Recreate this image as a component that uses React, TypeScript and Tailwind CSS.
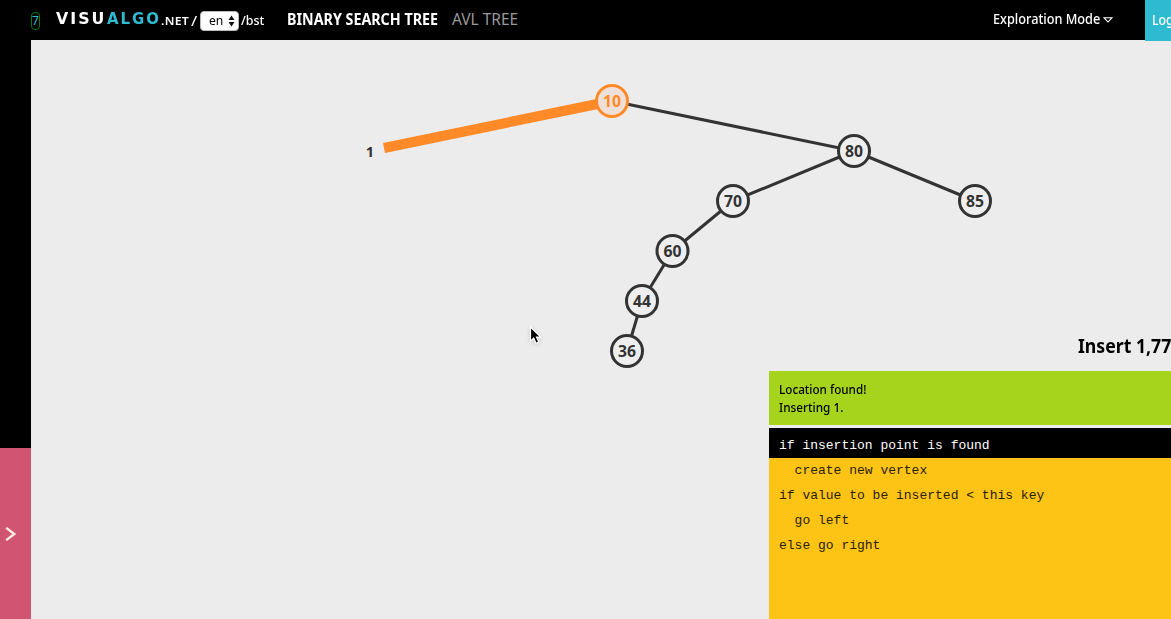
import { useLayoutEffect, useRef, useState } from "react";

type FitProps = { text: string; box: string; className: string };

/** One line of text condensed or widened to the width of its box. */
function FitText({ text, box, className }: FitProps) {
  const ref = useRef<HTMLSpanElement>(null);
  const [scale, setScale] = useState(1);
  useLayoutEffect(() => {
    const el = ref.current;
    if (el && el.parentElement) setScale(el.parentElement.offsetWidth / el.offsetWidth);
  }, [text]);
  return (
    <div className={`shrink-0 ${box}`}>
      <span
        ref={ref}
        className={`block w-max origin-left whitespace-nowrap ${className}`}
        style={{ transform: `scaleX(${scale})` }}
      >
        {text}
      </span>
    </div>
  );
}

const nodes = [
  { x: 854, y: 151, v: "80" },
  { x: 733, y: 201, v: "70" },
  { x: 975, y: 201, v: "85" },
  { x: 672.5, y: 251, v: "60" },
  { x: 642, y: 301, v: "44" },
  { x: 627, y: 351, v: "36" },
];

const edges = [
  [612, 101, 854, 151],
  [854, 151, 733, 201],
  [854, 151, 975, 201],
  [733, 201, 672.5, 251],
  [672.5, 251, 642, 301],
  [642, 301, 627, 351],
];

const code = ["  create new vertex", "if value to be inserted < this key", "  go left", "else go right"];

function Tree() {
  return (
    <svg className="absolute inset-0" width="1140" height="579" viewBox="31 40 1140 579">
      {edges.map(([a, b, c, d], i) => (
        <line key={i} x1={a} y1={b} x2={c} y2={d} stroke="#333" strokeWidth="3" />
      ))}
      <line x1="384" y1="148" x2="612" y2="101" stroke="#ff8a27" strokeWidth="10" />
      <circle cx="612" cy="101" r="15.5" fill="#eee0d8" stroke="#ff8a27" strokeWidth="3" />
      {nodes.map((n) => (
        <circle key={n.v} cx={n.x} cy={n.y} r="15.5" fill="#eee" stroke="#333" strokeWidth="3" />
      ))}
      <g fontFamily="Noto Sans, sans-serif" fontWeight="700" fontSize="15.5" textAnchor="middle" fill="#333">
        {nodes.map((n) => (
          <text key={n.v} x={n.x} y={n.y + 5.5} textLength="18" lengthAdjust="spacingAndGlyphs">
            {n.v}
          </text>
        ))}
        <text x="612" y="106.5" fill="#ff8a27" textLength="18" lengthAdjust="spacingAndGlyphs">10</text>
        <text x="370" y="156.5" fontSize="14.5">1</text>
      </g>
      <path
        d="M530.5 327v14.2l3.2-3.1 2.3 5.1 2.7-1.2-2.2-4.9h4.2z"
        fill="#000"
        stroke="#fff"
        strokeWidth="1.2"
        className="drop-shadow-sm"
      />
    </svg>
  );
}

export default function App() {
  return (
    <div className="flex h-[619px] w-[1171px] flex-col overflow-hidden bg-[#ececec] font-['Noto_Sans',sans-serif]">
      <header className="relative z-10 flex h-10 shrink-0 items-start bg-black pl-[31px] text-white">
        <div className="mt-3 flex h-[18px] w-[9px] items-center justify-center rounded-[4px] border border-[#087a08] text-[12px] leading-none text-[#2ebbd1]">
          7
        </div>
        <div className="ml-[16px] flex w-[105px] pt-[10px] font-['DejaVu_Sans',sans-serif] text-[15.5px] leading-[18px] font-bold tracking-[2px]">
          <FitText text="VISU" box="w-[51px]" className="" />
          <div className="flex text-[#2ebbd1]">
            <FitText text="ALGO" box="w-[54px]" className="" />
          </div>
        </div>
        <FitText text=".NET" box="w-[28px] pt-[13px]" className="text-[10.5px] leading-4 font-semibold tracking-wide" />
        <FitText text="/" box="ml-[2px] w-[6px] pt-[11px]" className="text-[14px] leading-5" />
        <div className="mt-[11px] ml-[3px] flex h-5 w-[39px] items-center rounded-[4px] border border-[#bbb] bg-white pl-[8px] pb-[2px] text-black">
          <FitText text="en" box="w-[14px]" className="text-[13px] leading-[16px]" />
          <svg className="mt-[2px] ml-[5px]" width="7" height="12" viewBox="0 0 7 12">
            <path d="M3.5 .5L6.5 5h-6zM3.5 11.5L6.5 7h-6z" fill="#111" />
          </svg>
        </div>
        <FitText text="/bst" box="ml-[2px] w-[23px] pt-[10px]" className="text-[13px] leading-5 font-medium" />
        <FitText text="BINARY SEARCH TREE" box="ml-[23px] w-[151px] pt-[7px]" className="text-[15.5px] leading-6 font-bold" />
        <FitText text="AVL TREE" box="ml-[14px] w-[66px] pt-[7px]" className="text-[15.5px] leading-6 text-[#999]" />
        <FitText text="Exploration Mode" box="ml-auto w-[107px] pt-[9px]" className="text-[14px] leading-5 font-medium" />
        <svg className="mt-[17px] ml-[3px]" width="10" height="6" viewBox="0 0 10 6">
          <path d="M1 .7h8L5 5z" fill="none" stroke="#fff" strokeWidth="1.1" />
        </svg>
        <div className="ml-[32px] h-[41px] w-[26px] shrink-0 overflow-hidden bg-[#2ebbd1] pt-[10px] pl-[7px]">
          <FitText text="Log" box="w-[22px]" className="text-[14px] leading-5 font-medium" />
        </div>
      </header>

      <div className="flex min-h-0 flex-1">
        <aside className="flex w-[31px] shrink-0 flex-col bg-black">
          <div className="flex-1" />
          <div className="flex h-[171px] items-center bg-[#d15573] pl-[5px]">
            <svg width="12" height="14" viewBox="0 0 12 14">
              <path d="M1.2.8L9.3 7l-8.1 6.2" fill="none" stroke="#fbe9e0" strokeWidth="2.4" />
            </svg>
          </div>
        </aside>

        <main className="relative flex min-w-0 flex-1 flex-col items-end justify-end">
          <Tree />
          <section className="relative flex w-[402px] flex-col">
            <div className="flex h-[39px] overflow-hidden pl-[309px]">
              <FitText text="Insert 1,77" box="w-[93px]" className="text-[19px] leading-7 font-bold" />
            </div>
            <div className="flex h-[54px] flex-col bg-[#a6d41c] pt-[10px] pl-[10px]">
              <FitText text="Location found!" box="h-[18px] w-[87px]" className="text-[12.5px] leading-[18px] font-medium" />
              <FitText text="Inserting 1." box="h-[18px] w-[64px]" className="text-[12.5px] leading-[18px] font-medium" />
            </div>
            <div className="mt-[3px] h-[191px] bg-[#fdc416] font-['Liberation_Mono',monospace] text-[13px] leading-[25px] whitespace-pre">
              <div className="h-[30px] bg-black pt-[5px] pl-[10px] text-white">if insertion point is found</div>
              {code.map((line) => (
                <div key={line} className="h-[25px] pl-[10px] text-[#2a2003]">
                  {line}
                </div>
              ))}
            </div>
          </section>
        </main>
      </div>
    </div>
  );
}
